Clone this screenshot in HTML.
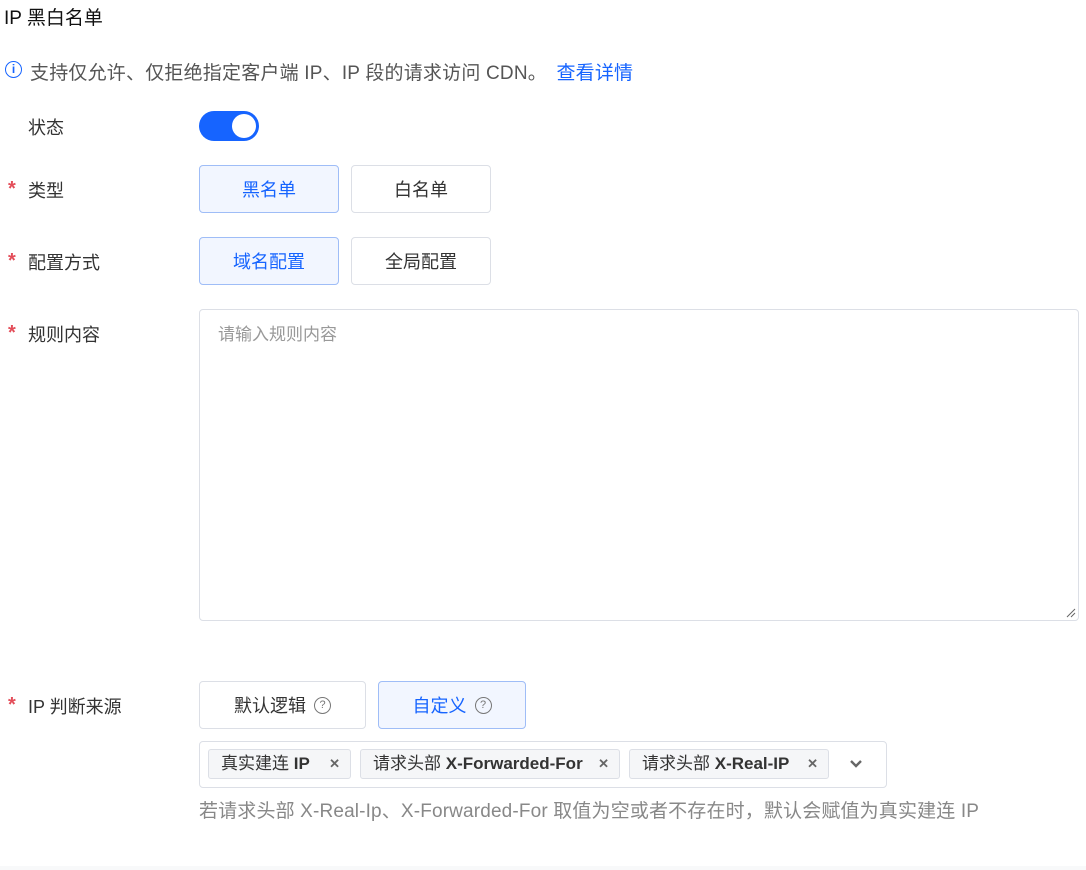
<!DOCTYPE html><html><head><meta charset="utf-8"><style>
body{margin:0;width:1086px;height:870px;background:#fff;font-family:"Liberation Sans","Noto Sans CJK SC",sans-serif;position:relative;overflow:hidden;color:#333}
.a{position:absolute;white-space:nowrap}
.lbl{font-size:18px;color:#333;left:28px}
.star{color:#e34d59;font-size:20px;font-weight:bold;left:8px}
.btn{position:absolute;box-sizing:border-box;border:1px solid #dcdfe6;border-radius:4px;font-size:18px;color:#333;display:flex;align-items:center;justify-content:center;background:#fff;white-space:nowrap}
.btn.on{background:#f2f6ff;border-color:#9fbdf7;color:#1664ff}
.tag{position:absolute;top:749px;height:30px;box-sizing:border-box;border:1px solid #dcdfe6;border-radius:3px;background:#f5f6f8;font-size:17px;color:#333;line-height:28px;padding-left:12px;white-space:nowrap}
.tag b{font-weight:600}
.x{position:absolute;right:10px;top:0;color:#666;font-size:13px;font-weight:bold}
.q{display:inline-block;width:15px;height:15px;border:1.5px solid #777;border-radius:50%;font-size:11px;line-height:15px;text-align:center;color:#777;margin-left:8px;box-sizing:content-box}
</style></head><body>
<div class="a" style="left:4px;top:3px;font-size:19px;color:#111">IP 黑白名单</div>
<div class="a" style="left:5px;top:61px;width:15px;height:15px;border:1.6px solid #1664ff;border-radius:50%;color:#1664ff;font-size:12px;line-height:15px;text-align:center;font-weight:bold">i</div>
<div class="a" style="left:30px;top:58px;font-size:19px;letter-spacing:0.2px;color:#555">支持仅允许、仅拒绝指定客户端 IP、IP 段的请求访问 CDN。 <span style="color:#1664ff;margin-left:4px">查看详情</span></div>
<div class="a lbl" style="top:114px">状态</div>
<div class="a" style="left:199px;top:111px;width:60px;height:30px;border-radius:15px;background:#1664ff"><div style="position:absolute;left:33px;top:3px;width:24px;height:24px;border-radius:50%;background:#fff"></div></div>
<div class="a star" style="top:178px">*</div><div class="a lbl" style="top:177px">类型</div>
<div class="btn on" style="left:199px;top:165px;width:140px;height:48px">黑名单</div>
<div class="btn" style="left:351px;top:165px;width:140px;height:48px">白名单</div>
<div class="a star" style="top:250px">*</div><div class="a lbl" style="top:249px">配置方式</div>
<div class="btn on" style="left:199px;top:237px;width:140px;height:48px">域名配置</div>
<div class="btn" style="left:351px;top:237px;width:140px;height:48px">全局配置</div>
<div class="a star" style="top:322px">*</div><div class="a lbl" style="top:321px">规则内容</div>
<div class="a" style="left:199px;top:309px;width:880px;height:312px;box-sizing:border-box;border:1px solid #dcdfe6;border-radius:4px"><div class="a" style="left:18px;top:10px;font-size:17px;color:#999">请输入规则内容</div>
<svg class="a" style="right:2px;bottom:2px" width="10" height="10"><path d="M9 1L1 9M9 5L5 9" stroke="#666" stroke-width="1"/></svg></div>
<div class="a star" style="top:694px">*</div><div class="a lbl" style="top:693px">IP 判断来源</div>
<div class="btn" style="left:199px;top:681px;width:167px;height:48px">默认逻辑<span class="q">?</span></div>
<div class="btn on" style="left:378px;top:681px;width:148px;height:48px">自定义<span class="q">?</span></div>
<div class="a" style="left:199px;top:741px;width:688px;height:47px;box-sizing:border-box;border:1px solid #dcdfe6;border-radius:4px"></div>
<div class="tag" style="left:208px;width:143px">真实建连 <b>IP</b><span class="x">✕</span></div>
<div class="tag" style="left:360px;width:260px">请求头部 <b>X-Forwarded-For</b><span class="x">✕</span></div>
<div class="tag" style="left:629px;width:200px">请求头部 <b>X-Real-IP</b><span class="x">✕</span></div>
<svg class="a" style="left:849px;top:759px" width="14" height="10"><path d="M2 2L7 7L12 2" stroke="#666" stroke-width="2.4" fill="none"/></svg>
<div class="a" style="left:199px;top:796px;font-size:19px;letter-spacing:0.15px;color:#888">若请求头部 X-Real-Ip、X-Forwarded-For 取值为空或者不存在时，默认会赋值为真实建连 IP</div>
<div class="a" style="left:0;top:866px;width:1086px;height:4px;background:#f8f9fa"></div>
</body></html>
